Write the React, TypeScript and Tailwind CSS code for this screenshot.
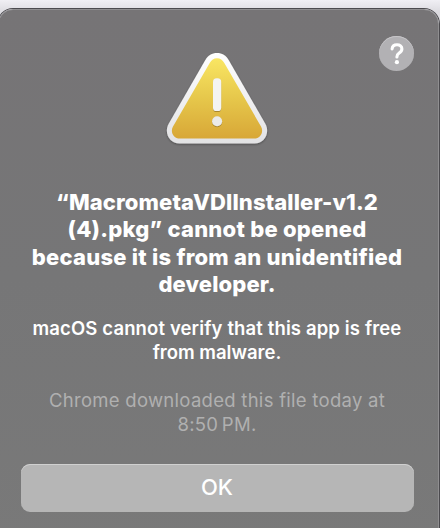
import React from "react";

function WarningIcon() {
  return (
    <svg width="112" height="104" viewBox="0 0 112 104" className="block">
      <defs>
        <linearGradient id="rim" x1="0" y1="0" x2="0" y2="1">
          <stop offset="0" stopColor="#ffffff" />
          <stop offset="1" stopColor="#e2e2e4" />
        </linearGradient>
        <linearGradient id="fill" x1="0" y1="0" x2="0" y2="1">
          <stop offset="0" stopColor="#f9e663" />
          <stop offset="0.5" stopColor="#e6c74b" />
          <stop offset="1" stopColor="#d8a737" />
        </linearGradient>
        <filter id="shadow" x="-10%" y="-10%" width="120%" height="125%">
          <feDropShadow dx="0" dy="1" stdDeviation="1" floodColor="#000" floodOpacity="0.35" />
        </filter>
        <filter id="markShadow" x="-50%" y="-20%" width="200%" height="140%">
          <feDropShadow dx="0" dy="0.8" stdDeviation="0.7" floodColor="#6d5310" floodOpacity="0.6" />
        </filter>
      </defs>
      <path
        d="M56 6C61 6 65 8.500 67.800 13.200L104.200 76.500C109.400 85.600 103.600 96.500 93.500 96.500H18.500C8.400 96.500 2.600 85.600 7.800 76.500L44.200 13.200C47 8.500 51 6 56 6Z"
        fill="url(#rim)"
        filter="url(#shadow)"
      />
      <path
        d="M56 11.200C59.200 11.200 61.600 13 63.300 16L100 79.500C103.100 85 99.500 91.500 93.200 91.500H18.800C12.500 91.500 8.900 85 12 79.500L48.700 16C50.400 13 52.800 11.200 56 11.200Z"
        fill="url(#fill)"
      />
      <g filter="url(#markShadow)" fill="#f4f4f2">
        <rect x="52" y="31.300" width="8.200" height="32.700" rx="3.600" />
        <circle cx="56.100" cy="74.200" r="5" fill="#ebebe9" />
      </g>
    </svg>
  );
}

export default function App() {
  return (
    <div className="flex h-[528px] w-[440px] flex-col overflow-hidden bg-linear-to-b from-[#f0eff4] from-0% to-[#dcdbe0] to-[12px] pt-[9px] font-['Inter','Liberation_Sans',sans-serif] text-white">
      <main className="-ml-[2px] flex h-[540px] w-[441px] shrink-0 flex-col items-center rounded-[15px] border border-[#8f8e90] bg-linear-to-b from-[#767476] via-[#767677] to-[#797979] pr-[3px] shadow-[0_0_0_1px_#4b4a4e]">
        <header className="flex h-[174px] w-full justify-end pt-[26px] pr-[21px]">
          <div className="mt-[11px] mr-[106px] h-[104px] w-[112px]">
            <WarningIcon />
          </div>
          <button
            aria-label="Help"
            className="flex size-[35px] items-center justify-center rounded-full bg-[#b2b1b4] shadow-[inset_0_1px_0_#c6c5c8]"
          >
            <svg width="16" height="24" viewBox="0 0 16 24" fill="none">
              <path
                d="M3.100 6.900C3.400 4.300 5.300 2.800 8 2.800C10.900 2.800 12.900 4.400 12.900 6.900C12.900 9.100 11.500 10.200 9.900 11.300C8.400 12.300 7.900 13.100 7.900 15"
                stroke="white"
                strokeWidth="3.100"
                strokeLinecap="round"
              />
              <circle cx="7.900" cy="20.200" r="2.100" fill="white" />
            </svg>
          </button>
        </header>

        <h1 className="mt-[5px] text-center text-[22px] leading-[27.400px] font-extrabold whitespace-nowrap">
          <span className="block tracking-[0.120px]">“MacrometaVDIInstaller-v1.2</span>
          <span className="block tracking-[0.240px]">(4).pkg” cannot be opened</span>
          <span className="block tracking-[0.240px]">because it is from an unidentified</span>
          <span className="block tracking-[0.120px]">developer.</span>
        </h1>

        <p className="mt-[17.600px] text-center text-[18.500px] leading-[24px] font-semibold whitespace-nowrap">
          <span className="block tracking-[0.130px]">macOS cannot verify that this app is free</span>
          <span className="block">from malware.</span>
        </p>

        <p className="mt-[24px] text-center text-[18.500px] leading-[24px] whitespace-nowrap text-[#b0b0b0]">
          <span className="block tracking-[0.280px]">Chrome downloaded this file today at</span>
          <span className="block tracking-[0.300px] [word-spacing:-2px]">8:50 PM.</span>
        </p>

        <button className="mt-[28px] flex h-[48px] w-[393px] items-center justify-center rounded-[9px] bg-[#b6b6b6] pb-[1px] text-[22px] font-medium shadow-[inset_0_1px_0_#d0d0d0]">
          OK
        </button>
      </main>
    </div>
  );
}
